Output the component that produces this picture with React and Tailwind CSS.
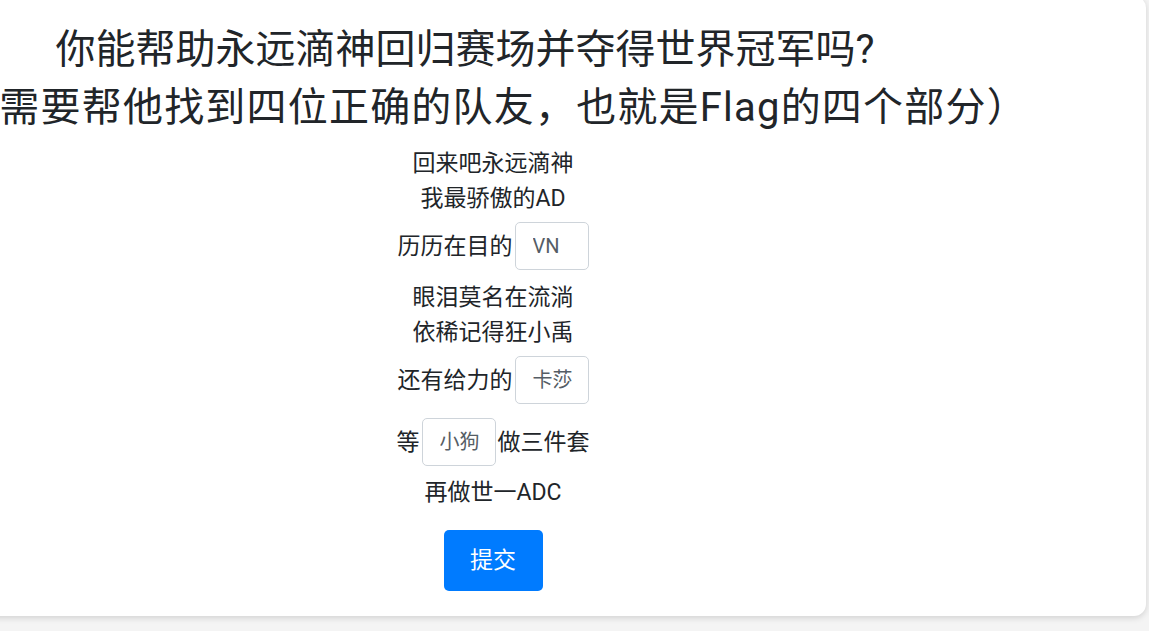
import React from "react";

function Blank({ placeholder }) {
    return (
        <input
            placeholder={placeholder}
            className="w-[74px] h-[48px] border border-[#ced4da] rounded-[5px] pl-[17px] text-[20px] text-[#495057] placeholder:text-[#555d65] bg-white outline-none"
        />
    );
}

function App() {
    return (
        <div className="min-h-screen bg-[#f4f4f4] overflow-hidden text-[#212529] font-['Roboto','Noto_Sans_CJK_SC',sans-serif]">
            <div className="-mt-1 -ml-[160px] w-[1306px] bg-white rounded-xl shadow-[0_2px_6px_rgba(0,0,0,0.14)] pt-[25px] pb-[25px]">
                <h1 className="text-[40px] leading-[58px] text-center font-normal">
                    <div className="pr-[56px]">你能帮助永远滴神回归赛场并夺得世界冠军吗?</div>
                    <div className="tracking-[1.2px]">（需要帮他找到四位正确的队友，也就是Flag的四个部分）</div>
                </h1>

                <div className="mt-[9px] flex flex-col items-center text-[23px] leading-[35px]">
                    <div>回来吧永远滴神</div>
                    <div>我最骄傲的AD</div>
                    <div className="flex items-center mt-[6px]">
                        <span>历历在目的</span>
                        <span className="ml-[2px]"><Blank placeholder="VN" /></span>
                    </div>
                    <div className="mt-[10px]">眼泪莫名在流淌</div>
                    <div>依稀记得狂小禹</div>
                    <div className="flex items-center mt-[6px]">
                        <span>还有给力的</span>
                        <span className="ml-[2px]"><Blank placeholder="卡莎" /></span>
                    </div>
                    <div className="flex items-center mt-[14px]">
                        <span>等</span>
                        <span className="mx-[2px]"><Blank placeholder="小狗" /></span>
                        <span>做三件套</span>
                    </div>
                    <div className="mt-[9px]">再做世一ADC</div>
                    <button className="mt-[20px] w-[99px] h-[61px] rounded-[5px] bg-[#007bff] text-white text-[23px]">
                        提交
                    </button>
                </div>
            </div>
        </div>
    );
}

export default App;
